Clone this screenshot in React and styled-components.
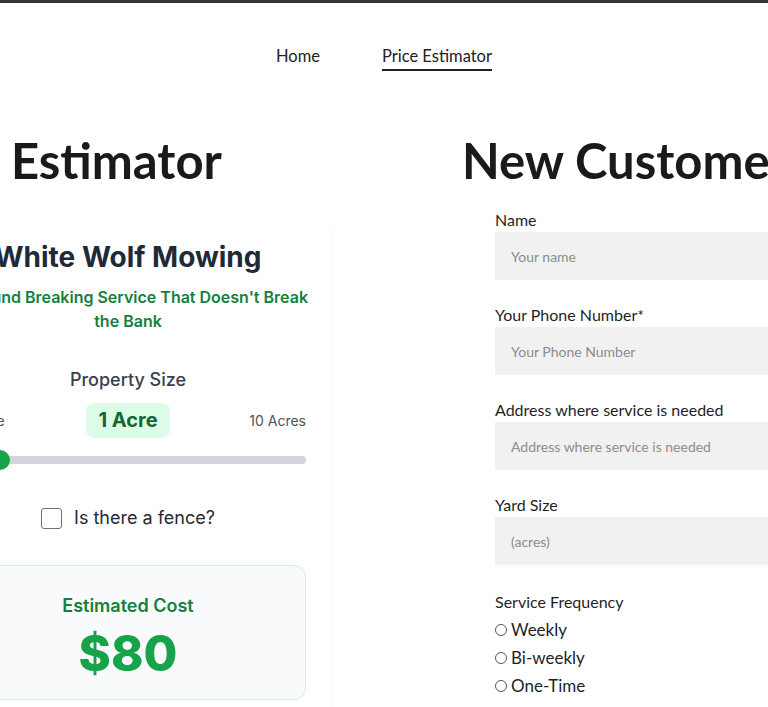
import React, { useState } from "react";
import styled, { createGlobalStyle } from "styled-components";

const GlobalStyle = createGlobalStyle`
  html, body {
    margin: 0;
    padding: 0;
    background: #ffffff;
    overflow: hidden;
  }
  * {
    box-sizing: border-box;
  }
`;

const Page = styled.div`
  width: 100%;
  font-family: "Lato", "Liberation Sans", sans-serif;
  color: #1f1f1f;
`;

const TopBar = styled.div`
  height: 3px;
  background: #363636;
`;

const Nav = styled.nav`
  display: flex;
  justify-content: center;
  gap: 62px;
  padding-top: 41px;
`;

const NavLink = styled.a`
  font-size: 16.5px;
  line-height: 24px;
  color: #222;
  text-decoration: none;
  padding-bottom: 1px;
  border-bottom: 2px solid ${props => (props.active ? "#222" : "transparent")};
`;

const Main = styled.main`
  display: flex;
  justify-content: center;
  gap: 129px;
  margin-top: 59px;
`;

const Column = styled.section`
  flex: 0 0 ${props => props.$width}px;
  min-width: 0;
  display: flex;
  flex-direction: column;
`;

const Heading = styled.h1`
  margin: 0;
  padding-left: 3px;
  font-family: "Lato", sans-serif;
  font-weight: 700;
  font-size: 49px;
  line-height: 60px;
  color: #1a1a1a;
  white-space: nowrap;
`;

/* estimator card */

const Card = styled.div`
  width: 404px;
  margin: 23px 0 0 40px;
  padding: 26px 24px 24px;
  background: #fff;
  border-radius: 16px;
  box-shadow: 0 2px 10px rgba(0, 0, 0, 0.025);
  font-family: "Inter", "Liberation Sans", sans-serif;
  text-align: center;
`;

const Brand = styled.h2`
  margin: 0;
  font-size: 28px;
  line-height: 36px;
  font-weight: 700;
  color: #1f2937;
  white-space: nowrap;
`;

const Tagline = styled.p`
  margin: 10px -8px 0;
  font-size: 16px;
  line-height: 24px;
  font-weight: 600;
  color: #15803d;
`;

const SectionLabel = styled.div`
  margin-top: 33px;
  font-size: 18px;
  line-height: 28px;
  font-weight: 500;
  color: #374151;
`;

const ScaleRow = styled.div`
  display: flex;
  align-items: center;
  justify-content: space-between;
  margin-top: 9px;
`;

const ScaleEnd = styled.span`
  font-size: 14px;
  color: #4b5563;
  width: 80px;
  text-align: ${props => props.$align};
`;

const ValueBadge = styled.span`
  padding: 4px 12px;
  line-height: 27px;
  font-size: 20px;
  font-weight: 700;
  color: #166534;
  background: #dcfce7;
  border-radius: 8px;
`;

const Track = styled.div`
  position: relative;
  height: 8px;
  margin-top: 18px;
  background: #d1d5db;
  border-radius: 4px;
`;

const Thumb = styled.div`
  position: absolute;
  top: 50%;
  width: 20px;
  height: 20px;
  margin: -10px 0 0 -10px;
  border-radius: 50%;
  background: #16a34a;
`;

const CheckRow = styled.label`
  display: flex;
  align-items: center;
  justify-content: center;
  gap: 12px;
  margin-top: 40px;
  font-size: 18px;
  line-height: 28px;
  color: #1f2937;
`;

const CheckBox = styled.span`
  width: 21px;
  height: 21px;
  border: 1.5px solid #6b7280;
  border-radius: 3px;
  background: #fff;
`;

const CostBox = styled.div`
  margin-top: 33px;
  padding: 26px 0 17px;
  background: #f9fafb;
  border: 1px solid #d5ece5;
  border-radius: 12px;
`;

const CostLabel = styled.div`
  font-size: 18px;
  line-height: 28px;
  font-weight: 600;
  color: #15803d;
`;

const CostValue = styled.div`
  margin-top: 6px;
  font-size: 49px;
  line-height: 56px;
  font-weight: 800;
  color: #16a34a;
`;

/* customer form */

const Form = styled.form`
  display: flex;
  flex-direction: column;
  margin: 18px 0 0 36px;
`;

const Field = styled.div`
  display: flex;
  flex-direction: column;
  margin-bottom: 23px;
`;

const Label = styled.label`
  font-size: 16px;
  line-height: 24px;
  color: #1f1f1f;
  margin-top: ${props => (props.$gap ? props.$gap : 0)}px;
`;

const Input = styled.input`
  height: 48px;
  border: none;
  outline: none;
  padding: 0 16px;
  background: #f1f1f1;
  font-family: "Lato", sans-serif;
  font-size: 14px;
  color: #222;
  &::placeholder {
    color: #8c8c8c;
  }
`;

const RadioList = styled.div`
  display: flex;
  flex-direction: column;
  margin-top: 2px;
`;

const RadioRow = styled.label`
  display: flex;
  align-items: center;
  gap: 4px;
  font-size: 17px;
  line-height: 28px;
  color: #1f1f1f;
`;

const Radio = styled.input`
  appearance: none;
  margin: 0;
  width: 12px;
  height: 12px;
  border: 1px solid #555;
  border-radius: 50%;
  background: #fff;
`;

const fields = [
  { label: "Name", placeholder: "Your name" },
  { label: "Your Phone Number*", placeholder: "Your Phone Number" },
  { label: "Address where service is needed", placeholder: "Address where service is needed" },
  { label: "Yard Size", placeholder: "(acres)" }
];

const frequencies = ["Weekly", "Bi-weekly", "One-Time"];

export default function App() {
  const [acres] = useState(1);
  const min = 0.25;
  const max = 10;
  // thumb sits a bit in from the track start
  const pct = ((acres - min) / (max - min)) * 100 + 6.3;

  return (
    <Page>
      <GlobalStyle />
      <TopBar />
      <Nav>
        <NavLink href="#">Home</NavLink>
        <NavLink href="#" active>
          Price Estimator
        </NavLink>
      </Nav>
      <Main>
        <Column $width={444}>
          <Heading>Price Estimator</Heading>
          <Card>
            <Brand>White Wolf Mowing</Brand>
            <Tagline>A Ground Breaking Service That Doesn't Break the Bank</Tagline>
            <SectionLabel>Property Size</SectionLabel>
            <ScaleRow>
              <ScaleEnd $align="left">1/4 Acre</ScaleEnd>
              <ValueBadge>{acres} Acre</ValueBadge>
              <ScaleEnd $align="right">10 Acres</ScaleEnd>
            </ScaleRow>
            <Track>
              <Thumb style={{ left: pct + "%" }} />
            </Track>
            <CheckRow>
              <CheckBox />
              Is there a fence?
            </CheckRow>
            <CostBox>
              <CostLabel>Estimated Cost</CostLabel>
              <CostValue>$80</CostValue>
            </CostBox>
          </Card>
        </Column>
        <Column $width={423}>
          <Heading>New Customer Form</Heading>
          <Form>
            {fields.map(f => (
              <Field key={f.label}>
                <Label>{f.label}</Label>
                <Input placeholder={f.placeholder} />
              </Field>
            ))}
            <Label $gap={2}>Service Frequency</Label>
            <RadioList>
              {frequencies.map(fr => (
                <RadioRow key={fr}>
                  <Radio type="radio" name="freq" />
                  {fr}
                </RadioRow>
              ))}
            </RadioList>
          </Form>
        </Column>
      </Main>
    </Page>
  );
}
